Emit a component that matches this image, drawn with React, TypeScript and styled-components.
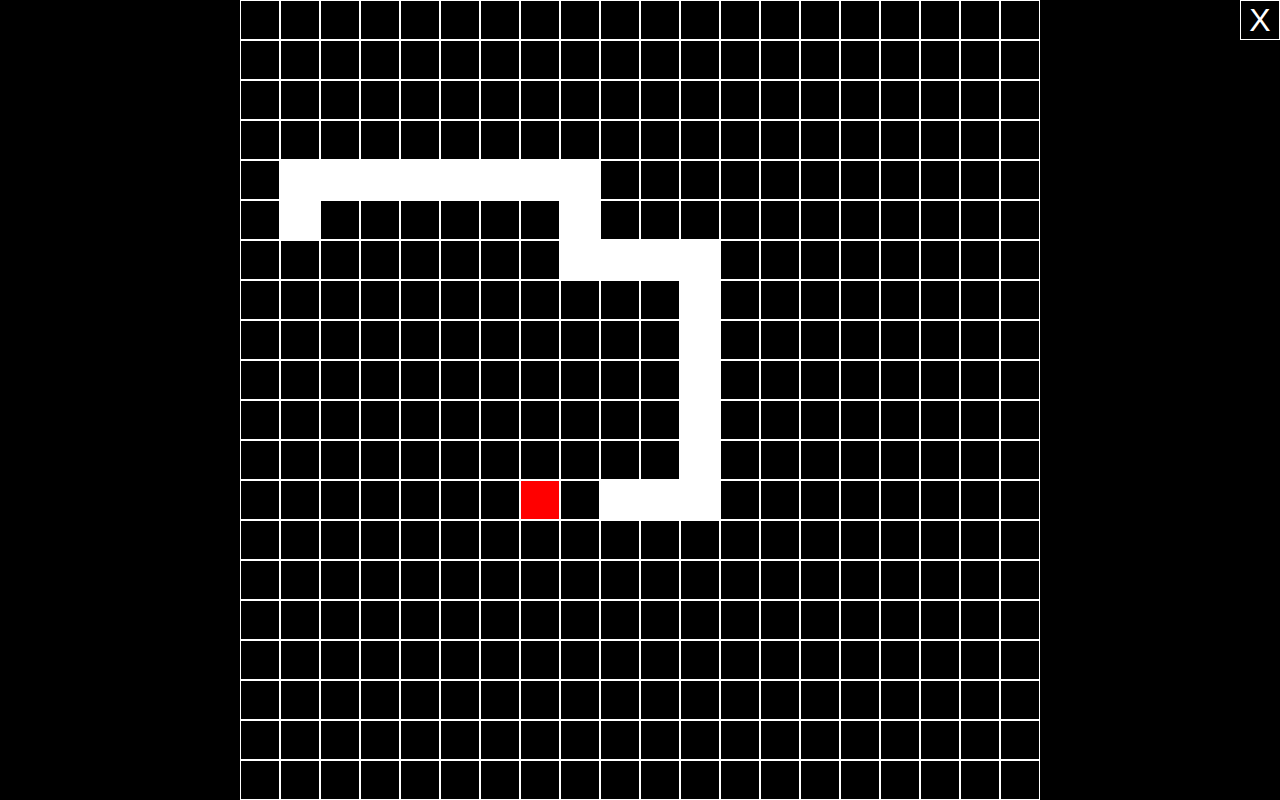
import React from "react";
import styled, { createGlobalStyle } from "styled-components";

const SIZE = 20;

const snake: [number, number][] = [
  [1, 5],
  [1, 4],
  [2, 4],
  [3, 4],
  [4, 4],
  [5, 4],
  [6, 4],
  [7, 4],
  [8, 4],
  [8, 5],
  [8, 6],
  [9, 6],
  [10, 6],
  [11, 6],
  [11, 7],
  [11, 8],
  [11, 9],
  [11, 10],
  [11, 11],
  [11, 12],
  [10, 12],
  [9, 12],
];

const food: [number, number] = [7, 12];

const GlobalStyle = createGlobalStyle`
  html, body {
    margin: 0;
    padding: 0;
    background: #000;
    overflow: hidden;
  }
  * {
    box-sizing: border-box;
  }
`;

const App = () => {
  const isSnake = (x: number, y: number) =>
    snake.some(([sx, sy]) => sx === x && sy === y);

  const cells = [];
  for (let y = 0; y < SIZE; y++) {
    for (let x = 0; x < SIZE; x++) {
      const kind = isSnake(x, y)
        ? "snake"
        : food[0] === x && food[1] === y
        ? "food"
        : "empty";
      cells.push(<Cell key={`${x}-${y}`} $kind={kind} />);
    }
  }

  return (
    <Container>
      <GlobalStyle />
      <Board>{cells}</Board>
      <CloseButton>X</CloseButton>
    </Container>
  );
};

export default App;

const Container = styled.div`
  position: relative;
  width: 1280px;
  height: 800px;
  background: #000;
  display: flex;
  justify-content: center;
`;

const Board = styled.div`
  display: grid;
  grid-template-columns: repeat(${SIZE}, 40px);
  grid-template-rows: repeat(${SIZE}, 40px);
  width: 800px;
  height: 800px;
`;

const Cell = styled.div<{ $kind: "snake" | "food" | "empty" }>`
  border: 1px solid #fff;
  background: ${({ $kind }) =>
    $kind === "snake" ? "#fff" : $kind === "food" ? "#ff0000" : "#000"};
`;

const CloseButton = styled.button`
  position: absolute;
  top: 0;
  right: 0;
  width: 40px;
  height: 40px;
  padding: 0;
  border: 1px solid #fff;
  background: #000;
  color: #fff;
  font-family: "Liberation Sans", Arial, sans-serif;
  font-size: 32px;
  line-height: 38px;
  text-align: center;
  cursor: pointer;
`;
